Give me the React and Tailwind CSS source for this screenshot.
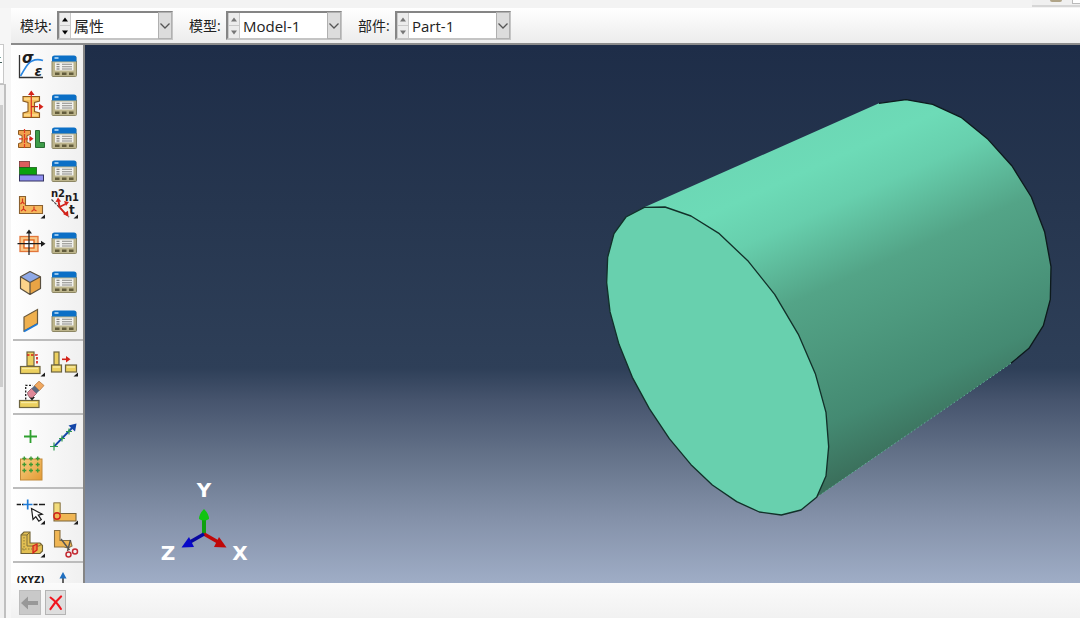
import React from "react";

const INK = "#1c1c1c";

function Icon({ children }) {
  return (
    <svg viewBox="0 0 33 33" className="block h-[33px] w-[33px] overflow-visible" fill="none" aria-hidden="true">
      {children}
    </svg>
  );
}

const Corner = () => <path d="M31 26.5v4h-4.5z" fill={INK} />;

const Manager = () => (
  <Icon>
    <rect x="5" y="6" width="24.5" height="20.5" rx="1.5" fill="#bdb58c" />
    <path d="M5 11v14.5a1 1 0 001 1h22.500a1 1 0 001-1V11" stroke="#8d8764" strokeWidth="1" />
    <path d="M5 11.500V8q0-2.500 2.500-2.500H27q2.500 0 2.500 2.500v3.500z" fill="#0b6fc6" />
    <path d="M7.500 8h4" stroke="#b9dcf7" strokeWidth="1.600" />
    <rect x="8" y="12.500" width="18.500" height="8" fill="#f1f1ee" />
    <path d="M9.500 14.200h3M9.500 16.700h3M9.500 19h3" stroke="#6b6b66" strokeWidth="1.100" />
    <path d="M15 14.200h10M15 16.700h10M15 19h10" stroke="#8a8a86" strokeWidth="1.100" />
    <path d="M8 23.800h4.500M15 23.800h4.500M22 23.800h4.500" stroke="#625c3c" strokeWidth="2.400" />
  </Icon>
);

const Material = () => (
  <Icon>
    <path d="M5.500 5v22.500H29" stroke="#333" strokeWidth="1.300" />
    <path d="M6.500 26C11 19 13 13 18 11q5-2.500 11-.5" stroke="#2a86e0" strokeWidth="1.700" />
    <text x="8" y="13" fontSize="15" fontWeight="700" fontStyle="italic" fontFamily="'DejaVu Sans', sans-serif" fill={INK}>σ</text>
    <text x="20.500" y="26" fontSize="14" fontWeight="700" fontStyle="italic" fontFamily="'DejaVu Sans', sans-serif" fill={INK}>ε</text>
  </Icon>
);

const Section = () => (
  <Icon>
    <path d="M9 7.500h16.500v4.500l-5 1.500v9l5 1.500v4.500H9V24l5-1.500v-9L9 12z" fill="#f6c05c" stroke="#8a5a20" strokeWidth="1.100" />
    <path d="M10 10h14M10 26h14" stroke="#ffe9ad" strokeWidth="1.200" />
    <path d="M17.300 4v24" stroke="#e03a22" strokeWidth="1.300" />
    <path d="M14 6l3.300-4.500L20.600 6z" fill="#d4231a" />
    <path d="M17 17.700h9" stroke="#d4231a" strokeWidth="1.200" strokeDasharray="3 1" />
    <path d="M25 14.500l4.500 3.200-4.500 3.200z" fill="#d4231a" />
  </Icon>
);

const AssignSection = () => (
  <Icon>
    <path d="M4.500 8.500h12v4L13 13.500v7l3.500 1v4h-12v-4l3.500-1v-7l-3.500-1z" fill="#f0a04c" stroke="#8a5a20" strokeWidth="1" />
    <path d="M10.500 7v20M5 16.800h11" stroke="#e03a22" strokeWidth="1.200" strokeDasharray="4 1" />
    <path d="M15.500 13.800l4 3-4 3z" fill="#d4231a" />
    <path d="M21.500 8.500h4V20.500h5v5h-9z" fill="#3d9c48" stroke="#2b6a34" strokeWidth="1" />
  </Icon>
);

const Composite = () => (
  <Icon>
    <rect x="5.500" y="6.500" width="10" height="6" fill="#dd5d5d" stroke="#7b3434" strokeWidth=".8" />
    <rect x="5.500" y="12.500" width="17" height="7.500" fill="#0da00d" stroke="#176217" strokeWidth=".8" />
    <rect x="5.500" y="20" width="24" height="6" fill="#8f8ff0" stroke="#33335f" strokeWidth="1" />
  </Icon>
);

const Orientation = () => (
  <Icon>
    <path d="M5.500 8.500h6v9H28.500V25.500h-23z" fill="#f4b75c" stroke="#8a6030" strokeWidth="1.100" />
    <path d="M8.500 10.500v3.500l-2 2m2-2l2 2M9.500 18v3l-2.500 2m2.500-2l2.500 2M20 18.500v3l-2.500 2m2.500-2l2.500 1.500" stroke="#d83a22" strokeWidth="1.200" />
    <Corner />
  </Icon>
);

const Normals = () => (
  <Icon>
    <path d="M4.500 11.500L22 29" stroke="#444" strokeWidth="1.200" strokeDasharray="3 1" />
    <path d="M12.500 19l-1-6M12.500 19l6-3M12.500 19l6 7" stroke="#d4231a" strokeWidth="1.900" />
    <path d="M8.500 14l2.500-4.500 3.200 4zM17 13l5 1-3 4zM16 26l5.500 2.800-.5-6z" fill="#d4231a" />
    <g fontSize="10" fontWeight="700" fontFamily="'DejaVu Sans', sans-serif" fill={INK}>
      <text x="4" y="9">n2</text>
      <text x="18" y="13">n1</text>
      <text x="22" y="26" fontSize="12">t</text>
    </g>
    <Corner />
  </Icon>
);

const Skin = () => (
  <Icon>
    <rect x="6" y="9.500" width="18" height="15" fill="#f9c98a" stroke="#e2763a" strokeWidth="1.300" />
    <rect x="10" y="13" width="10" height="8" fill="#fff" stroke="#e2661f" strokeWidth="1.400" />
    <path d="M15 5v23M3.500 16.700H29" stroke={INK} strokeWidth="1.200" />
    <path d="M12 6.500L15 2.500l3 4zM27 13.700l4.500 3-4.500 3z" fill={INK} />
  </Icon>
);

const Cube = () => (
  <Icon>
    <path d="M16 5.500l10.500 5.200L16 16.500 6.500 10.700z" fill="#8fa9e6" />
    <path d="M6.500 10.700L16 16.500v12l-9.500-6z" fill="#fbd38a" />
    <path d="M26.500 10.700L16 16.500v12l10.500-6z" fill="#e9a445" />
    <path d="M16 5.500l10.500 5.200V22.500L16 28.500l-9.500-6V10.700zM6.500 10.700l9.500 5.800 10.500-5.800M16 16.500v12" stroke="#5a5040" strokeWidth="1.200" strokeLinejoin="round" />
  </Icon>
);

const Plate = () => (
  <Icon>
    <path d="M23.500 4.500v14L10 26V12z" fill="#efb04e" stroke="#6b5a3c" strokeWidth="1.200" />
    <path d="M10 26.500l13.500-7.500" stroke="#1f7ad6" strokeWidth="1.800" />
  </Icon>
);

const Yellow = (props) => <rect fill="#ecd05f" stroke="#6e6540" strokeWidth="1.200" {...props} />;

const Stringer = () => (
  <Icon>
    <Yellow x="13" y="6" width="7" height="14" />
    <Yellow x="6.500" y="20.500" width="19.500" height="7" />
    <path d="M8 22.500h16" stroke="#f8eaa0" strokeWidth="1.400" />
    <path d="M13 9h10v10" stroke="#d4231a" strokeWidth="1.700" strokeDasharray="2.500 1.500" />
    <Corner />
  </Icon>
);

const Inertia = () => (
  <Icon>
    <Yellow x="7" y="6" width="5" height="13" />
    <Yellow x="4.500" y="19" width="10" height="7" />
    <Yellow x="18.500" y="19" width="11" height="7" />
    <path d="M6 21h7M20 21h8" stroke="#f8eaa0" strokeWidth="1.400" />
    <path d="M15 13.300h5" stroke="#d4231a" strokeWidth="1.600" />
    <path d="M19 10l4.500 3.300-4.500 3.300z" fill="#d4231a" />
    <Corner />
  </Icon>
);

const Eraser = () => (
  <Icon>
    <Yellow x="5.500" y="21.500" width="19.500" height="7" />
    <path d="M7 23.500h16" stroke="#f8eaa0" strokeWidth="1.400" />
    <path d="M11.700 20.500V6.300h7" stroke={INK} strokeWidth="1.300" strokeDasharray="2 1.500" />
    <path d="M15 18h6l-3 3.500z" fill={INK} />
    <path d="M13.500 13.500l4-4 5 5-4 4q-2 .8-3.500-.8t-1.500-4.200z" fill="#df8798" stroke="#8a5560" strokeWidth=".8" />
    <path d="M17.500 9.500l3-3 5 5-3 3z" fill="#5a6980" />
    <path d="M20.500 6.500l4.500-4.300 5 4.300-4.500 5z" fill="#f0a860" stroke="#b07238" strokeWidth=".7" />
  </Icon>
);

const Point = () => (
  <Icon>
    <path d="M16.500 10v13M10 16.500h13" stroke="#2fa02f" strokeWidth="1.800" />
  </Icon>
);

const Axis = () => (
  <Icon>
    <path d="M7 26.700L26 7" stroke="#1446a8" strokeWidth="1.900" />
    <path d="M21.500 5.500l8-2-1.500 8z" fill="#1446a8" />
    <path d="M7 22.500v8M3 26.500h8M15 15.500v6M12 18.500h6M22 8.500v6M19 11.500h6" stroke="#2f9a4f" strokeWidth="1.200" />
  </Icon>
);

const Datum = () => (
  <Icon>
    <defs>
      <linearGradient id="datum" x1="0" y1="0" x2="1" y2="1">
        <stop offset="0" stopColor="#f7cf83" />
        <stop offset="1" stopColor="#e39a33" />
      </linearGradient>
    </defs>
    <rect x="6.500" y="6" width="21.500" height="21" fill="url(#datum)" stroke="#c28a3a" strokeWidth="1" />
    {[5.5, 11.5, 17.5].map((y) =>
      [10.3, 17, 23.7].map((x) => (
        <path key={`${x}-${y}`} d={`M${x - 2} ${y}h4M${x} ${y - 2}v4`} stroke="#3f9a33" strokeWidth="1.400" />
      ))
    )}
  </Icon>
);

const Pick = () => (
  <Icon>
    <path d="M2.700 10.500H7M8 10.500h1.500M19.500 10.500h4M25 10.500h6" stroke={INK} strokeWidth="1.500" />
    <path d="M13.700 5.500v10M9 10.500h9.500" stroke="#1f7ad6" strokeWidth="1.700" />
    <path d="M17.500 14.500l1.500 11 2.800-2.800 3 4.500 2.500-1.700-3-4.300 4-1z" fill="#fff" stroke={INK} strokeWidth="1.200" />
    <Corner />
  </Icon>
);

const Partition = () => (
  <Icon>
    <path d="M7 9h6v10.500h16V27H7z" fill="#f0b654" stroke="#7a6438" strokeWidth="1.100" />
    <rect x="7" y="9" width="6" height="10.500" fill="#f2dc7c" stroke="#9a8448" strokeWidth=".8" />
    <circle cx="10" cy="22" r="3.200" stroke="#d4231a" strokeWidth="1.400" />
    <Corner />
  </Icon>
);

const Cell = () => (
  <Icon>
    <path d="M7 8l3-3h6v11h10l2.500 2.500V24L26 26.500H7z" fill="#e2bf52" stroke="#6e6034" strokeWidth="1.100" />
    <path d="M7 8h6l3-3M13 8v11h12l3-2" stroke="#81703a" strokeWidth="1" />
    <path d="M10 10v14M8 22h10" stroke="#8a7a3c" strokeWidth="1" strokeDasharray="1.500 1.500" />
    <path d="M19 19l4-2v6l-4 3z" fill="#f08040" stroke="#d4231a" strokeWidth="1.300" />
    <Corner />
  </Icon>
);

const Trim = () => (
  <Icon>
    <path d="M7.500 3.500H13v10h10.500L25 19l-4 2-4-1H7.500z" fill="#f0b654" stroke="#8a7040" strokeWidth="1.100" />
    <path d="M14 12l8.500 11M23.500 13l-3 11" stroke="#555" strokeWidth="1.400" />
    <circle cx="21.500" cy="27.500" r="2.500" stroke="#c32a32" strokeWidth="1.500" />
    <circle cx="28" cy="24.500" r="2.500" stroke="#c32a32" strokeWidth="1.500" />
  </Icon>
);

const Coordinates = () => (
  <Icon>
    <text x="16.500" y="15" textAnchor="middle" fontSize="9" fontWeight="700" fontFamily="'DejaVu Sans', sans-serif" fill={INK}>(XYZ)</text>
  </Icon>
);

const UpArrow = () => (
  <Icon>
    <path d="M16 9v10" stroke="#333" strokeWidth="1.500" />
    <path d="M12.500 10.500L16 4l3.500 6.500z" fill="#1f6fc0" />
  </Icon>
);

const SECTIONS = [
  [
    [["创建材料", Material], ["材料管理器", Manager]],
    [
      ["创建截面", Section], ["截面管理器", Manager],
      ["指派截面", AssignSection], ["截面指派管理器", Manager],
      ["创建复合层", Composite], ["复合层管理器", Manager],
      ["指派材料方向", Orientation], ["指派法向", Normals],
    ],
    [["创建剖面", Skin], ["剖面管理器", Manager]],
    [["创建蒙皮", Cube], ["蒙皮管理器", Manager]],
    [["创建壳", Plate], ["壳管理器", Manager]],
  ],
  [[["创建桁条", Stringer], ["创建惯量", Inertia], ["删除特征", Eraser]]],
  [[["创建基准点", Point], ["创建基准轴", Axis], ["创建基准面", Datum]]],
  [[["分割边", Pick], ["分割面", Partition], ["分割几何元素", Cell], ["修剪", Trim]]],
  [[["查询坐标", Coordinates], ["基准坐标系", UpArrow]]],
];

function Toolbox() {
  return (
    <nav aria-label="工具箱" className="h-full w-[74px] shrink-0 overflow-hidden border-r-2 border-[#858585] bg-gradient-to-r from-white to-[#f0f0f0] pt-[5px]">
      {SECTIONS.map((groups, i) => (
        <div key={i}>
          {i > 0 && <hr className="mt-px mb-[5px] ml-0.5 border-t-2 border-[#bcbcbc]" />}
          <div className="flex flex-col gap-1.5 pl-[3px]">
            {groups.map((tools, j) => (
              <div key={j} className="grid grid-cols-[33px_33px]">
                {tools.map(([name, Drawing]) => (
                  <button key={name} type="button" aria-label={name} className="h-[33px] w-[33px]">
                    <Drawing />
                  </button>
                ))}
              </div>
            ))}
          </div>
        </div>
      ))}
    </nav>
  );
}

function Step({ label, down, dim }) {
  return (
    <button type="button" aria-label={label} className="flex flex-1 items-center justify-center bg-[#ececec]">
      <svg viewBox="0 0 8 5" className={dim ? "h-[5px] w-2 fill-[#777]" : "h-[5px] w-2 fill-black"}>
        <path d={down ? "M1 .5h6L4 4.500z" : "M1 4.500h6L4 .5z"} />
      </svg>
    </button>
  );
}

function Picker({ id, label, value, dim }) {
  return (
    <div className="flex items-center gap-[5px]">
      <label htmlFor={id} className="w-8 text-sm whitespace-nowrap">{label}</label>
      <div className="relative flex h-[29px] w-[116px] border-2 border-t-[#858585] border-r-[#c4c4c4] border-b-[#c4c4c4] border-l-[#858585] bg-white">
        <div className="flex w-3 shrink-0 flex-col gap-px bg-[#c9c9c9] px-px">
          <Step label={`${label} 上一项`} dim={dim} />
          <Step label={`${label} 下一项`} dim={dim} down />
        </div>
        <select id={id} defaultValue={value} className="w-full min-w-0 appearance-none bg-transparent pl-[3px] text-[15px] leading-6 outline-none">
          <option>{value}</option>
        </select>
        <span className="pointer-events-none absolute inset-y-0 right-0 flex w-3 items-center justify-center bg-[#dcdcdc] outline outline-[#b0b0b0]">
          <svg viewBox="0 0 12 8" className="h-2 w-3" fill="none" stroke="#555" strokeWidth="1.300">
            <path d="M1.500 1.500L6 6l4.500-4.500" />
          </svg>
        </span>
      </div>
    </div>
  );
}

const FACE =
  "163,382 225,381 303,408 388,461 475,544 554,643 625,763 676,881 708,997 716,1100 708,1188 680,1252 633,1290 574,1305 508,1296 440,1265 367,1215 303,1154 238,1076 178,986 127,892 87,793 60,695 50,608 53,532 72,461 108,411";
const RIM =
  "867,70 948,59 1028,73 1113,112 1194,178 1266,258 1324,351 1364,456 1383,560 1381,658 1360,737 1317,805 1263,850";

function Viewport() {
  return (
    <main className="min-w-0 flex-1 bg-[linear-gradient(to_bottom,#1e2d48_0%,#26364f_30%,#2e3f58_60%,#46546d_66%,#66748b_77%,#8491a9_88%,#9fadc6_100%)]">
      <svg viewBox="85 45 995 538" preserveAspectRatio="xMidYMid meet" className="block h-full w-full" role="img" aria-label="Part-1">
        <defs>
          <linearGradient id="shade" gradientUnits="userSpaceOnUse" x1="171" y1="380" x2="574" y2="1277">
            <stop offset="0" stopColor="#6cd8b5" />
            <stop offset=".1" stopColor="#6ddbb7" />
            <stop offset=".23" stopColor="#67cfad" />
            <stop offset=".45" stopColor="#53a487" />
            <stop offset=".62" stopColor="#4d997e" />
            <stop offset=".83" stopColor="#448a72" />
            <stop offset="1" stopColor="#3b705c" />
          </linearGradient>
        </defs>
        <g transform="translate(590 80) scale(.33333)" strokeLinejoin="round">
          <polygon points={`163,382 ${RIM} 680,1252 400,800`} fill="url(#shade)" />
          <polyline points={RIM} fill="none" stroke="#0d1a1c" strokeWidth="4" />
          <path d="M1263 850L680 1252" stroke="#5fae94" strokeWidth="3" strokeDasharray="5 7" />
          <polygon points={FACE} fill="#68d0ae" stroke="#123029" strokeWidth="4" />
        </g>
        <path d="M204 534V516" stroke="#10a010" strokeWidth="4" />
        <path d="M199 519q0-5 5-10 5 5 5 10-5 3-10 0z" fill="#10c410" />
        <path d="M204 534l14 8" stroke="#c00808" strokeWidth="3.500" />
        <path d="M219 537l7.500 10.500-12.500-.5z" fill="#c00808" />
        <path d="M204 534l-14 8" stroke="#0808a0" strokeWidth="3.500" />
        <path d="M189 537l-7.500 10.500 12.500-.5z" fill="#0808c8" />
        <g fill="#fff" fontFamily="'DejaVu Sans', sans-serif" fontSize="20" fontWeight="700" textAnchor="middle">
          <text x="204" y="497">Y</text>
          <text x="240" y="560">X</text>
          <text x="168" y="560">Z</text>
        </g>
      </svg>
    </main>
  );
}

export default function App() {
  return (
    <div className="flex h-screen flex-col overflow-hidden bg-[#f4f4f4] font-['Open_Sans','Noto_Sans_CJK_SC',sans-serif] text-[#222]">
      <div className="flex h-2 shrink-0 justify-end bg-[#f3f3f3]">
        <div className="flex h-[7px] w-12 justify-between border-b-2 border-[#d6d6d6] bg-[#f0f0f0] pl-[18px]">
          <span className="h-0.5 w-3 rounded-b-full bg-[#b0a488]" />
          <span className="h-1 w-2 border-b border-l border-[#bbb] bg-white" />
        </div>
      </div>
      <div className="flex min-h-0 flex-1">
        <aside className="flex w-[11px] shrink-0 flex-col bg-[#f6f6f6] pt-9">
          <div className="flex h-10 w-1 flex-col gap-1 border-y border-r border-[#c8c8c8] bg-white pt-3">
            <span className="h-px w-px bg-[#6fa09a]" />
            <span className="h-px w-0.5 bg-[#44605c]" />
          </div>
          <div className="w-1.5 flex-1 border-t border-r-2 border-[#c0c0c0] bg-[#f0f0f0] pt-5">
            <div className="h-[282px] w-[3px] bg-[#cdcdcd]" />
          </div>
        </aside>
        <div className="flex min-w-0 flex-1 flex-col">
          <header className="flex h-[37px] shrink-0 items-center gap-4 border-b-2 border-[#8c8c8c] bg-gradient-to-b from-white to-[#ececec] pl-[9px]">
            <Picker id="module" label="模块:" value="属性" />
            <Picker id="model" label="模型:" value="Model-1" dim />
            <Picker id="part" label="部件:" value="Part-1" dim />
          </header>
          <div className="flex min-h-0 flex-1">
            <Toolbox />
            <Viewport />
          </div>
          <footer className="flex h-[35px] shrink-0 gap-1 bg-gradient-to-b from-[#fbfbfb] to-[#f1f1f1] pt-[7px] pl-2">
            <button type="button" aria-label="返回" className="flex h-[25px] w-[22px] items-center justify-center border border-[#bdbdbd] bg-[#c9c9c9]">
              <svg viewBox="0 0 20 16" className="h-4 w-5">
                <path d="M1 8l7-6.500V6h10v4H8v4.500z" fill="#989898" />
              </svg>
            </button>
            <button type="button" aria-label="取消" className="flex h-[25px] w-[21px] items-center justify-center border border-[#b4b4b4] bg-[#dedede]">
              <svg viewBox="0 0 16 16" className="h-4 w-4" fill="none" stroke="#f0141e" strokeLinecap="round">
                <path d="M2.500 2.500Q9 7 13 14" strokeWidth="2" />
                <path d="M13 1.500Q7 7 2.500 14" strokeWidth="2.200" />
              </svg>
            </button>
          </footer>
        </div>
      </div>
    </div>
  );
}
